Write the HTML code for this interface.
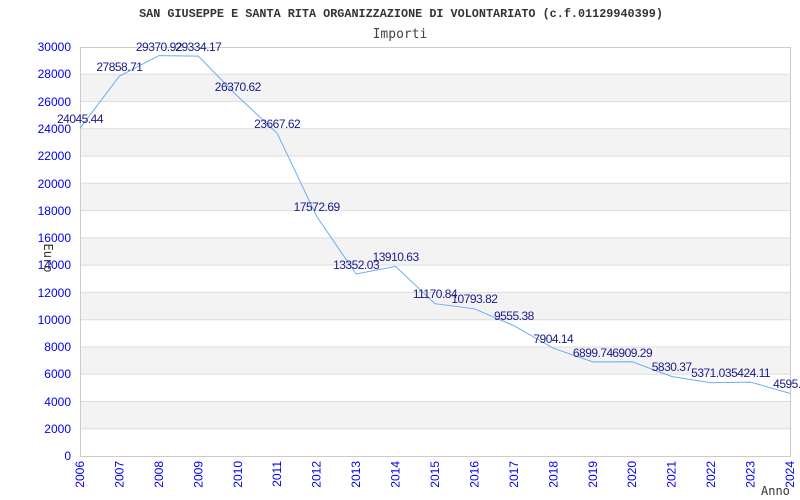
<!DOCTYPE html><html><head><style>body{margin:0;background:#fff}svg{display:block}</style></head><body>
<svg width="800" height="500" xmlns="http://www.w3.org/2000/svg">
<rect width="800" height="500" fill="#fff"/>
<text x="401" y="17" text-anchor="middle" font-family="Liberation Mono, monospace" font-weight="bold" font-size="11.8" fill="#333">SAN GIUSEPPE E SANTA RITA ORGANIZZAZIONE DI VOLONTARIATO (c.f.01129940399)</text>
<text x="400" y="38" text-anchor="middle" font-family="DejaVu Sans Mono, monospace" font-size="13" fill="#444">Importi</text>
<g fill="#f3f3f3">
<rect x="80" y="74.3" width="710" height="27.3"/><rect x="80" y="128.8" width="710" height="27.3"/><rect x="80" y="183.3" width="710" height="27.3"/><rect x="80" y="237.9" width="710" height="27.3"/><rect x="80" y="292.4" width="710" height="27.3"/><rect x="80" y="347" width="710" height="27.3"/><rect x="80" y="401.5" width="710" height="27.3"/>
</g>
<g stroke="#ddd" stroke-width="1">
<line x1="80" x2="790" y1="74.3" y2="74.3"/><line x1="80" x2="790" y1="101.6" y2="101.6"/><line x1="80" x2="790" y1="128.8" y2="128.8"/><line x1="80" x2="790" y1="156.1" y2="156.1"/><line x1="80" x2="790" y1="183.3" y2="183.3"/><line x1="80" x2="790" y1="210.6" y2="210.6"/><line x1="80" x2="790" y1="237.9" y2="237.9"/><line x1="80" x2="790" y1="265.1" y2="265.1"/><line x1="80" x2="790" y1="292.4" y2="292.4"/><line x1="80" x2="790" y1="319.7" y2="319.7"/><line x1="80" x2="790" y1="347" y2="347"/><line x1="80" x2="790" y1="374.2" y2="374.2"/><line x1="80" x2="790" y1="401.5" y2="401.5"/><line x1="80" x2="790" y1="428.8" y2="428.8"/>
</g>
<rect x="80.5" y="47.5" width="710" height="409" fill="none" stroke="#ccc"/>
<g font-family="Liberation Sans, sans-serif" font-size="12" fill="#0000ee" text-anchor="end">
<text x="71" y="51">30000</text><text x="71" y="78">28000</text><text x="71" y="106">26000</text><text x="71" y="133">24000</text><text x="71" y="160">22000</text><text x="71" y="188">20000</text><text x="71" y="215">18000</text><text x="71" y="242">16000</text><text x="71" y="269">14000</text><text x="71" y="297">12000</text><text x="71" y="324">10000</text><text x="71" y="351">8000</text><text x="71" y="378">6000</text><text x="71" y="406">4000</text><text x="71" y="433">2000</text><text x="71" y="460">0</text>
</g>
<g font-family="Liberation Sans, sans-serif" font-size="12" fill="#0000ee" text-anchor="end">
<text transform="translate(84,461) rotate(-90)">2006</text>
<text transform="translate(123.4,461) rotate(-90)">2007</text>
<text transform="translate(162.9,461) rotate(-90)">2008</text>
<text transform="translate(202.3,461) rotate(-90)">2009</text>
<text transform="translate(241.8,461) rotate(-90)">2010</text>
<text transform="translate(281.2,461) rotate(-90)">2011</text>
<text transform="translate(320.7,461) rotate(-90)">2012</text>
<text transform="translate(360.1,461) rotate(-90)">2013</text>
<text transform="translate(399.6,461) rotate(-90)">2014</text>
<text transform="translate(439,461) rotate(-90)">2015</text>
<text transform="translate(478.4,461) rotate(-90)">2016</text>
<text transform="translate(517.9,461) rotate(-90)">2017</text>
<text transform="translate(557.3,461) rotate(-90)">2018</text>
<text transform="translate(596.8,461) rotate(-90)">2019</text>
<text transform="translate(636.2,461) rotate(-90)">2020</text>
<text transform="translate(675.7,461) rotate(-90)">2021</text>
<text transform="translate(715.1,461) rotate(-90)">2022</text>
<text transform="translate(754.6,461) rotate(-90)">2023</text>
<text transform="translate(794,461) rotate(-90)">2024</text>
</g>
<text transform="translate(44,258) rotate(90)" font-family="DejaVu Sans Mono, monospace" font-size="12" fill="#333" text-anchor="middle">Euro</text>
<text x="761" y="495" font-family="DejaVu Sans Mono, monospace" font-size="12" fill="#333">Anno</text>
<polyline fill="none" stroke="#6aaef0" stroke-width="1" points="80,128.2 119.4,76.2 158.9,55.6 198.3,56.1 237.8,96.5 277.2,133.3 316.7,216.4 356.1,274 395.6,266.4 435,303.7 474.4,308.8 513.9,325.7 553.3,348.2 592.8,361.9 632.2,361.8 671.7,376.5 711.1,382.8 750.6,382.1 790,393.4"/>
<g font-family="Liberation Sans, sans-serif" font-size="12" letter-spacing="-0.5" fill="#1a1a88" text-anchor="middle">
<text x="80" y="123">24045.44</text>
<text x="119.4" y="71">27858.71</text>
<text x="158.9" y="51">29370.92</text>
<text x="198.3" y="51">29334.17</text>
<text x="237.8" y="91">26370.62</text>
<text x="277.2" y="128">23667.62</text>
<text x="316.7" y="211">17572.69</text>
<text x="356.1" y="269">13352.03</text>
<text x="395.6" y="261">13910.63</text>
<text x="435" y="298">11170.84</text>
<text x="474.4" y="303">10793.82</text>
<text x="513.9" y="320">9555.38</text>
<text x="553.3" y="343">7904.14</text>
<text x="592.8" y="357">6899.74</text>
<text x="632.2" y="357">6909.29</text>
<text x="671.7" y="371">5830.37</text>
<text x="711.1" y="377">5371.03</text>
<text x="750.6" y="377">5424.11</text>
<text x="790" y="388">4595.2</text>
</g>
</svg>
</body></html>
